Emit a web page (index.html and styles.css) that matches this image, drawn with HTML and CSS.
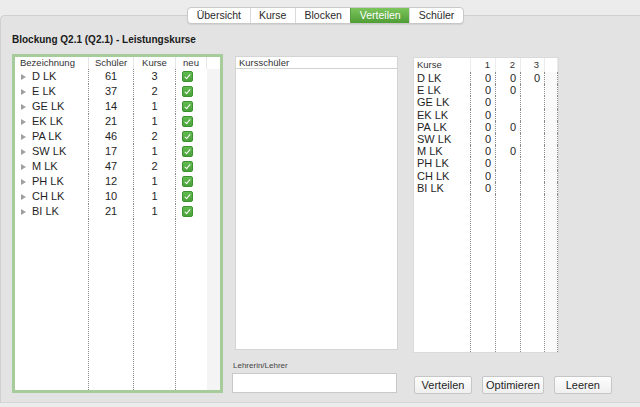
FILE: index.html
```html
<!DOCTYPE html>
<html lang="de">
  <head>
    <meta charset="UTF-8" />
    <meta name="viewport" content="width=device-width, initial-scale=1.0" />
    <title>Blockung</title>
    <link rel="stylesheet" href="styles.css">
  </head>
  <body>
    <div class="tabs-row">
      <div class="tabs">
        <div class="tab">Übersicht</div>
        <div class="tab">Kurse</div>
        <div class="tab">Blocken</div>
        <div class="tab active">Verteilen</div>
        <div class="tab">Schüler</div>
      </div>
    </div>

    <div class="box">
      <h1 class="title">Blockung Q2.1 (Q2.1) - Leistungskurse</h1>

      <div class="main">
        <!-- Kursliste -->
        <div class="col-left">
          <div class="courses">
            <div class="hd name">Bezeichnung</div>
            <div class="hd">Schüler</div>
            <div class="hd">Kurse</div>
            <div class="hd">neu</div>
            <div class="hd last"></div>

            <div class="cell name"><span class="arrow"></span>D LK</div>
            <div class="cell num">61</div>
            <div class="cell num">3</div>
            <div class="cell box-col"><span class="check"></span></div>
            <div class="cell last"></div>

            <div class="cell name"><span class="arrow"></span>E LK</div>
            <div class="cell num">37</div>
            <div class="cell num">2</div>
            <div class="cell box-col"><span class="check"></span></div>
            <div class="cell last"></div>

            <div class="cell name"><span class="arrow"></span>GE LK</div>
            <div class="cell num">14</div>
            <div class="cell num">1</div>
            <div class="cell box-col"><span class="check"></span></div>
            <div class="cell last"></div>

            <div class="cell name"><span class="arrow"></span>EK LK</div>
            <div class="cell num">21</div>
            <div class="cell num">1</div>
            <div class="cell box-col"><span class="check"></span></div>
            <div class="cell last"></div>

            <div class="cell name"><span class="arrow"></span>PA LK</div>
            <div class="cell num">46</div>
            <div class="cell num">2</div>
            <div class="cell box-col"><span class="check"></span></div>
            <div class="cell last"></div>

            <div class="cell name"><span class="arrow"></span>SW LK</div>
            <div class="cell num">17</div>
            <div class="cell num">1</div>
            <div class="cell box-col"><span class="check"></span></div>
            <div class="cell last"></div>

            <div class="cell name"><span class="arrow"></span>M LK</div>
            <div class="cell num">47</div>
            <div class="cell num">2</div>
            <div class="cell box-col"><span class="check"></span></div>
            <div class="cell last"></div>

            <div class="cell name"><span class="arrow"></span>PH LK</div>
            <div class="cell num">12</div>
            <div class="cell num">1</div>
            <div class="cell box-col"><span class="check"></span></div>
            <div class="cell last"></div>

            <div class="cell name"><span class="arrow"></span>CH LK</div>
            <div class="cell num">10</div>
            <div class="cell num">1</div>
            <div class="cell box-col"><span class="check"></span></div>
            <div class="cell last"></div>

            <div class="cell name"><span class="arrow"></span>BI LK</div>
            <div class="cell num">21</div>
            <div class="cell num">1</div>
            <div class="cell box-col"><span class="check"></span></div>
            <div class="cell last"></div>

            <div class="cell"></div>
            <div class="cell"></div>
            <div class="cell"></div>
            <div class="cell box-col"></div>
            <div class="cell last"></div>
          </div>
        </div>

        <!-- Kursschueler -->
        <div class="col-mid">
          <div class="students">
            <div class="students-head">Kursschüler</div>
          </div>
          <label class="field-label">Lehrerin/Lehrer</label>
          <input class="field" type="text" />
        </div>

        <!-- Verteilung -->
        <div class="col-right">
          <div class="dist">
            <div class="dh name">Kurse</div>
            <div class="dh">1</div>
            <div class="dh">2</div>
            <div class="dh">3</div>
            <div class="dh"></div>

            <div class="dc name">D LK</div><div class="dc">0</div><div class="dc">0</div><div class="dc">0</div><div class="dc end"></div>
            <div class="dc name">E LK</div><div class="dc">0</div><div class="dc">0</div><div class="dc"></div><div class="dc end"></div>
            <div class="dc name">GE LK</div><div class="dc">0</div><div class="dc"></div><div class="dc"></div><div class="dc end"></div>
            <div class="dc name">EK LK</div><div class="dc">0</div><div class="dc"></div><div class="dc"></div><div class="dc end"></div>
            <div class="dc name">PA LK</div><div class="dc">0</div><div class="dc">0</div><div class="dc"></div><div class="dc end"></div>
            <div class="dc name">SW LK</div><div class="dc">0</div><div class="dc"></div><div class="dc"></div><div class="dc end"></div>
            <div class="dc name">M LK</div><div class="dc">0</div><div class="dc">0</div><div class="dc"></div><div class="dc end"></div>
            <div class="dc name">PH LK</div><div class="dc">0</div><div class="dc"></div><div class="dc"></div><div class="dc end"></div>
            <div class="dc name">CH LK</div><div class="dc">0</div><div class="dc"></div><div class="dc"></div><div class="dc end"></div>
            <div class="dc name">BI LK</div><div class="dc">0</div><div class="dc"></div><div class="dc"></div><div class="dc end"></div>
            <div class="dc name"></div><div class="dc"></div><div class="dc"></div><div class="dc"></div><div class="dc end"></div>
          </div>
          <div class="actions">
            <button class="btn">Verteilen</button>
            <button class="btn">Optimieren</button>
            <button class="btn">Leeren</button>
          </div>
        </div>
      </div>
    </div>
  </body>
</html>
```

FILE: styles.css
```css
* {
  padding: 0;
  margin: 0;
  border: 0;
}
*,
*:before,
*:after {
  box-sizing: border-box;
}
html,
body {
  width: 640px;
  height: 407px;
  overflow: hidden;
}
body {
  background-color: #ececec;
  font-family: "Liberation Sans", Arial, sans-serif;
  color: #1f1f1f;
  line-height: 1;
}
input,
button {
  font-family: inherit;
}
/* -------------- */
.tabs-row {
  position: relative;
  z-index: 1;
  display: flex;
  justify-content: center;
  padding: 7px 0 0 11px;
}
.tabs {
  display: flex;
  height: 17px;
  background-color: #fff;
  border: 1px solid #c8c8c8;
  border-radius: 4px;
  box-shadow: 0 1px 1px rgba(0, 0, 0, 0.08);
  overflow: hidden;
}
.tab {
  padding: 0 8.5px;
  font-size: 10.5px;
  line-height: 15px;
  color: #2a2a2a;
  border-left: 1px solid #dadada;
}
.tab:first-child {
  border-left: none;
}
.tab.active {
  background: linear-gradient(#7cc55c, #4f9d35);
  color: #fff;
  border-left-color: #5a9f43;
}

.box {
  margin-top: -9px;
  height: 388px;
  background-color: #e3e3e3;
  border-top: 1px solid #d0d0d0;
  border-left: 1px solid #d0d0d0;
  border-bottom: 1px solid #d6d6d6;
  border-radius: 5px 0 0 0;
  padding: 18px 0 0 11px;
}
.title {
  font-size: 10px;
  font-weight: bold;
  line-height: 12px;
  color: #1a1a1a;
}
.main {
  display: flex;
  align-items: flex-start;
  margin-top: 8px;
}

/* linke Tabelle */
.col-left {
  width: 211px;
  height: 339px;
  border: 3px solid #a6cc9b;
  background-color: #fff;
}
.courses {
  height: 100%;
  display: grid;
  grid-template-columns: 74px 45px 42px 31px 13px;
  grid-template-rows: 12px repeat(10, 15px) 1fr;
}
.hd {
  font-size: 9.5px;
  line-height: 12px;
  text-align: center;
  color: #333;
  border-right: 1px solid #e6e6e6;
}
.hd.name {
  text-align: left;
  padding-left: 5px;
}
.hd.last {
  border-right: none;
}
.cell {
  font-size: 11px;
  line-height: 15px;
  border-right: 1px dotted #8a8a8a;
}
.cell.num {
  text-align: center;
}
.cell.name {
  display: flex;
  align-items: center;
  padding-left: 6px;
}
.cell.box-col {
  border-right: none;
  padding: 2px 0 0 6px;
}
.cell.last {
  border-right: none;
  background-color: #f4f4f4;
}
.arrow {
  width: 0;
  height: 0;
  border-top: 3.5px solid transparent;
  border-bottom: 3.5px solid transparent;
  border-left: 5px solid #a0a0a0;
  margin-right: 6px;
}
.check {
  display: block;
  position: relative;
  width: 11px;
  height: 11px;
  border-radius: 2px;
  background: linear-gradient(#62bb4f, #4aa23b);
  border: 1px solid #3f9232;
}
.check:after {
  content: "";
  position: absolute;
  left: 3px;
  top: 0.5px;
  width: 3px;
  height: 6px;
  border-right: 1.6px solid #fff;
  border-bottom: 1.6px solid #fff;
  transform: rotate(40deg);
}

/* mittlere Liste */
.col-mid {
  width: 166px;
  margin-left: 9px;
  display: flex;
  flex-direction: column;
}
.students {
  margin: 2px 0 0 3px;
  width: 163px;
  height: 294px;
  background-color: #fff;
  border: 1px solid #d4d4d4;
}
.students-head {
  font-size: 9.5px;
  line-height: 11px;
  padding-left: 3px;
  border-bottom: 1px solid #d2d2d2;
  color: #333;
}
.field-label {
  margin-top: 11px;
  font-size: 8px;
  line-height: 10px;
  color: #444;
  padding-left: 1px;
}
.field {
  margin-top: 2px;
  width: 165px;
  height: 20px;
  background-color: #fff;
  border: 1px solid #c9c9c9;
}

/* rechte Tabelle */
.col-right {
  margin-left: 15px;
  display: flex;
  flex-direction: column;
}
.dist {
  margin-top: 3px;
  width: 146px;
  height: 296px;
  background-color: #fff;
  border: 1px solid #dadada;
  display: grid;
  grid-template-columns: 57px 25px 25px 24px 13px;
  grid-template-rows: 14px repeat(10, 12.2px) 1fr;
}
.dh {
  font-size: 9.5px;
  line-height: 14px;
  text-align: right;
  padding-right: 5px;
  color: #333;
  border-right: 1px solid #ececec;
}
.dh.name {
  text-align: left;
  padding-left: 3px;
}
.dc {
  font-size: 11px;
  line-height: 12.2px;
  text-align: right;
  padding-right: 4px;
  border-right: 1px dotted #8a8a8a;
}
.dc.name {
  text-align: left;
  padding-left: 3px;
}
.dc.end {
  background-color: #fafafa;
}
.actions {
  display: flex;
  gap: 10px;
  margin: 23px 0 0 1px;
}
.btn {
  min-width: 58px;
  height: 18px;
  padding: 0 3px;
  font-size: 11px;
  color: #1f1f1f;
  background: linear-gradient(#fdfdfd, #efefef);
  border: 1px solid #c6c6c6;
  border-radius: 2px;
}
```
